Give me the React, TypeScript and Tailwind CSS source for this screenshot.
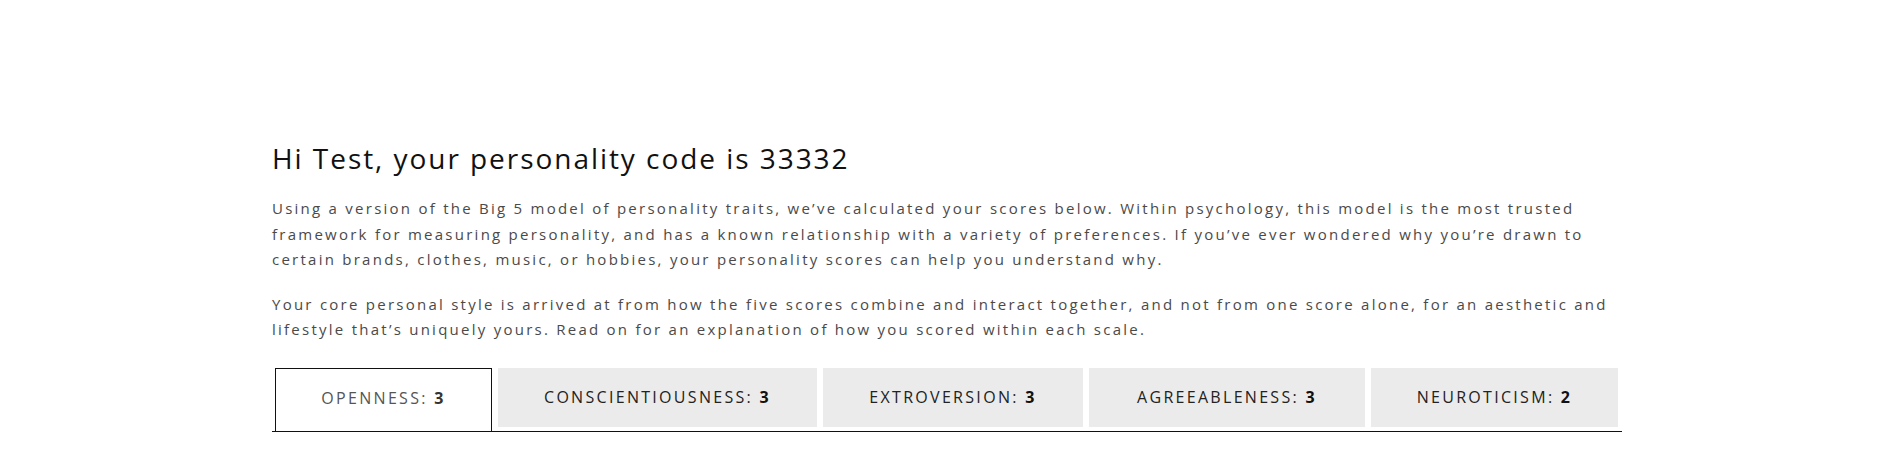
import React from "react";

const traits = [
  { name: "Openness", score: 3, width: "w-[217px]" },
  { name: "Conscientiousness", score: 3, width: "w-[319px]" },
  { name: "Extroversion", score: 3, width: "w-[260px]" },
  { name: "Agreeableness", score: 3, width: "w-[276px]" },
  { name: "Neuroticism", score: 2, width: "w-[247px]" },
];

export default function App() {
  const active = 0;

  return (
    <main className="min-h-[454px] bg-white font-['Open_Sans',sans-serif]">
      <div className="w-[1350px] mx-auto pt-[139px]">
        <h1 className="text-[28px] leading-[38px] font-normal text-[#111] tracking-[1.95px]">
          Hi Test, your personality code is 33332
        </h1>

        <div className="mt-[19px] text-[15px] leading-[25.5px] text-[#4a4a4a] tracking-[2.25px]">
          <p className="mb-[19px]">
            Using a version of the Big 5 model of personality traits, we’ve calculated your scores below. Within
            psychology, this model is the most trusted framework for measuring personality, and has a known relationship
            with a variety of preferences. If you’ve ever wondered why you’re drawn to certain brands, clothes, music, or
            hobbies, your personality scores can help you understand why.
          </p>
          <p>
            Your core personal style is arrived at from how the five scores combine and interact together, and not from
            one score alone, for an aesthetic and lifestyle that’s uniquely yours. Read on for an explanation of how you
            scored within each scale.
          </p>
        </div>

        {/* trait tabs */}
        <div className="mt-[25px] flex items-start gap-[6px] pl-[3px] border-b border-[#111]">
          {traits.map((t, idx) =>
            idx === active ? (
              <button
                key={t.name}
                className={`${t.width} h-[63px] bg-white border border-b-0 border-[#111] flex items-center justify-center pb-[4px] text-[16px] uppercase tracking-[2.3px] text-[#555]`}
              >
                {t.name}:&nbsp;<b className="font-bold text-[#333]">{t.score}</b>
              </button>
            ) : (
              <button
                key={t.name}
                className={`${t.width} h-[59px] bg-[#ebebeb] flex items-center justify-center text-[16px] uppercase tracking-[2.3px] text-[#222]`}
              >
                {t.name}:&nbsp;<b className="font-bold text-[#111]">{t.score}</b>
              </button>
            )
          )}
        </div>
      </div>
    </main>
  );
}
